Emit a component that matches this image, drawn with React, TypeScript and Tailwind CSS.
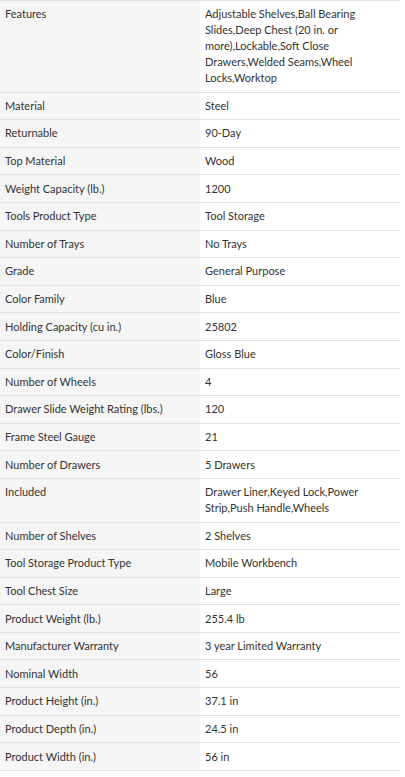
const specs: [string, string][] = [
  ["Features", "Adjustable Shelves,Ball Bearing Slides,Deep Chest (20 in. or more),Lockable,Soft Close Drawers,Welded Seams,Wheel Locks,Worktop"],
  ["Material", "Steel"],
  ["Returnable", "90-Day"],
  ["Top Material", "Wood"],
  ["Weight Capacity (lb.)", "1200"],
  ["Tools Product Type", "Tool Storage"],
  ["Number of Trays", "No Trays"],
  ["Grade", "General Purpose"],
  ["Color Family", "Blue"],
  ["Holding Capacity (cu in.)", "25802"],
  ["Color/Finish", "Gloss Blue"],
  ["Number of Wheels", "4"],
  ["Drawer Slide Weight Rating (lbs.)", "120"],
  ["Frame Steel Gauge", "21"],
  ["Number of Drawers", "5 Drawers"],
  ["Included", "Drawer Liner,Keyed Lock,Power Strip,Push Handle,Wheels"],
  ["Number of Shelves", "2 Shelves"],
  ["Tool Storage Product Type", "Mobile Workbench"],
  ["Tool Chest Size", "Large"],
  ["Product Weight (lb.)", "255.4 lb"],
  ["Manufacturer Warranty", "3 year Limited Warranty"],
  ["Nominal Width", "56"],
  ["Product Height (in.)", "37.1 in"],
  ["Product Depth (in.)", "24.5 in"],
  ["Product Width (in.)", "56 in"],
];

export default function App() {
  return (
    <div className="w-[405px] min-h-[777px] bg-white font-['Lato',sans-serif] text-[11px] leading-4 text-[#333]">
      <div className="w-[400px] border-t border-[#e2e2e2]">
        {specs.map(([name, value]) => (
          <div key={name} className="grid grid-cols-[200px_200px] border-b border-[#e2e2e2]">
            <div className="bg-[#f5f5f5] px-[5px] py-[5.3px]">{name}</div>
            <div className="bg-white pl-[5px] pr-[36px] py-[5.3px]">{value}</div>
          </div>
        ))}
      </div>
    </div>
  );
}
